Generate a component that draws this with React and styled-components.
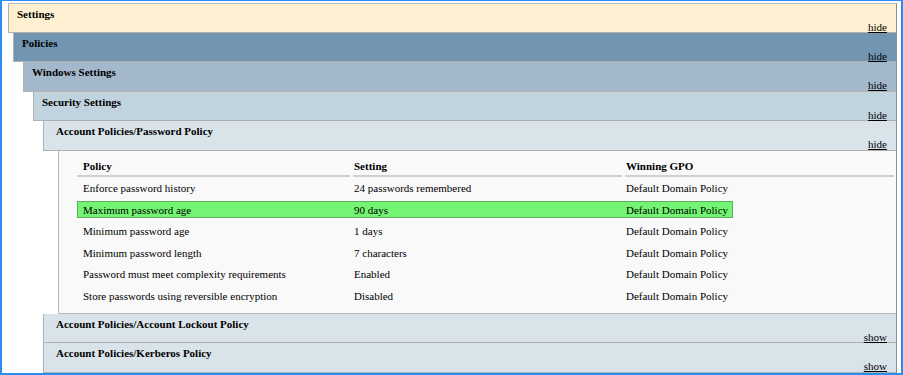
import React from 'react';
import styled, { createGlobalStyle } from 'styled-components';

const Global = createGlobalStyle`
  html, body { margin: 0; padding: 0; background: #fff; }
  body { font-family: "Liberation Serif", "Times New Roman", serif; font-size: 11px; color: #000; }
`;

const Frame = styled.div`
  width: 903px;
  height: 375px;
  box-sizing: border-box;
  border: 2px solid #2b8cf2;
  border-top-width: 1px;
  overflow: hidden;
  padding: 2px 4px 0 6px;
  background: #fff;
`;

const Report = styled.div`
  border-right: 1px solid #8e8e8e;
`;

const Indent = styled.div`
  margin-left: ${p => p.size}px;
`;

const Header = styled.div`
  height: 29.5px;
  box-sizing: border-box;
  display: flex;
  flex-direction: column;
  padding: 3px 9px 0 ${p => p.pad || 8}px;
  background: ${p => p.bg};
  border-left: 1px solid #b0b0b0;
  border-bottom: 1px solid #b0b0b0;
  border-top: ${p => (p.top ? '1px solid #b8b8b8' : '0')};
`;

const Title = styled.span`
  font-weight: bold;
  line-height: 14px;
`;

const Toggle = styled.a`
  margin-top: auto;
  align-self: flex-end;
  line-height: 12px;
  color: #000;
  text-decoration: underline;
  cursor: pointer;
`;

const Panel = styled.div`
  margin-left: 15px;
  background: #f9f9f9;
  border-left: 1px solid #b8b8b8;
  border-bottom: 1px solid #b8b8b8;
  padding: 6px 2px 4px 18px;
`;

const Table = styled.div`
  display: flex;
  flex-direction: column;
`;

const HeadRow = styled.div`
  display: flex;
  gap: 3px;
  margin-bottom: 3px;
`;

const HeadCell = styled.div`
  width: ${p => p.w ? `${p.w}px` : 'auto'};
  flex: ${p => p.w ? 'none' : '1'};
  box-sizing: border-box;
  height: 20px;
  line-height: 19px;
  padding-left: ${p => p.pad || 1}px;
  font-weight: bold;
  border-bottom: 2px solid #d0d0d0;
`;

const Row = styled.div`
  display: flex;
  height: 17px;
  box-sizing: border-box;
  align-items: center;
  margin-bottom: 4.5px;
  width: ${p => (p.hit ? 'fit-content' : 'auto')};
  background: ${p => (p.hit ? '#73f573' : 'transparent')};
  border: 1px solid ${p => (p.hit ? '#5fae5f' : 'transparent')};
`;

const Cell = styled.div`
  width: ${p => p.w}px;
  flex: none;
  box-sizing: border-box;
  padding-left: ${p => p.pad || 0}px;
  white-space: nowrap;
`;

const rows = [
  ['Enforce password history', '24 passwords remembered', 'Default Domain Policy'],
  ['Maximum password age', '90 days', 'Default Domain Policy', true],
  ['Minimum password age', '1 days', 'Default Domain Policy'],
  ['Minimum password length', '7 characters', 'Default Domain Policy'],
  ['Password must meet complexity requirements', 'Enabled', 'Default Domain Policy'],
  ['Store passwords using reversible encryption', 'Disabled', 'Default Domain Policy'],
];

export default function App() {
  return (
    <>
      <Global />
      <Frame>
        <Report>
          <Header bg="#fef0d1" top>
            <Title>Settings</Title>
            <Toggle>hide</Toggle>
          </Header>
          <Indent size={5}>
            <Header bg="#7296b2">
              <Title>Policies</Title>
              <Toggle>hide</Toggle>
            </Header>
            <Indent size={10}>
              <Header bg="#a3b8cb">
                <Title>Windows Settings</Title>
                <Toggle>hide</Toggle>
              </Header>
              <Indent size={10}>
                <Header bg="#c1d3df">
                  <Title>Security Settings</Title>
                  <Toggle>hide</Toggle>
                </Header>
                <Indent size={10}>
                  <Header bg="#d9e3ea" pad={12}>
                    <Title>Account Policies/Password Policy</Title>
                    <Toggle>hide</Toggle>
                  </Header>
                  <Panel>
                    <Table>
                      <HeadRow>
                        <HeadCell w={273} pad={6}>Policy</HeadCell>
                        <HeadCell w={269}>Setting</HeadCell>
                        <HeadCell>Winning GPO</HeadCell>
                      </HeadRow>
                      {rows.map(([policy, setting, gpo, hit]) => (
                        <Row key={policy} hit={hit}>
                          <Cell w={276} pad={5}>{policy}</Cell>
                          <Cell w={272}>{setting}</Cell>
                          <Cell w={106}>{gpo}</Cell>
                        </Row>
                      ))}
                    </Table>
                  </Panel>
                  <Header bg="#d9e3ea" pad={12}>
                    <Title>Account Policies/Account Lockout Policy</Title>
                    <Toggle>show</Toggle>
                  </Header>
                  <Header bg="#d9e3ea" pad={12}>
                    <Title>Account Policies/Kerberos Policy</Title>
                    <Toggle>show</Toggle>
                  </Header>
                </Indent>
              </Indent>
            </Indent>
          </Indent>
        </Report>
      </Frame>
    </>
  );
}
